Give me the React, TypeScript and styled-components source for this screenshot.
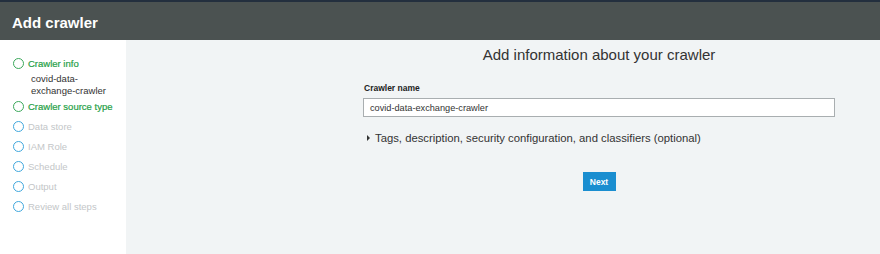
import React from "react";
import styled, { createGlobalStyle } from "styled-components";

const Global = createGlobalStyle`
  html, body { margin: 0; padding: 0; }
  body { font-family: "Liberation Sans", Arial, sans-serif; background: #f1f4f5; }
`;

const Page = styled.div`
  width: 880px;
  height: 254px;
  display: flex;
  flex-direction: column;
  overflow: hidden;
`;

const TopStrip = styled.div`
  height: 2px;
  background: #232f3e;
`;

const Header = styled.div`
  height: 38px;
  box-sizing: border-box;
  padding: 3px 0 0 12px;
  background: #4b5251;
  display: flex;
  align-items: center;
  color: #fff;
  font-weight: bold;
  font-size: 15px;
`;

const Body = styled.div`
  flex: 1;
  display: flex;
`;

const Sidebar = styled.nav`
  width: 126px;
  background: #fff;
  padding: 13px 0 0 13px;
  box-sizing: border-box;
  display: flex;
  flex-direction: column;
`;

const Step = styled.div<{ $done: boolean }>`
  display: flex;
  align-items: center;
  gap: 4px;
  height: 20px;
  font-size: 9.5px;
  color: ${(p) => (p.$done ? "#25a046" : "#c3c6c8")};
  -webkit-text-stroke: ${(p) => (p.$done ? "0.2px #25a046" : "0")};
`;

const Circle = styled.span<{ $done: boolean }>`
  width: 9px;
  height: 9px;
  border-radius: 50%;
  border: 1.5px solid ${(p) => (p.$done ? "#3aa85a" : "#3fa7dd")};
  flex: none;
`;

const SubText = styled.div`
  font-size: 9.5px;
  color: #333;
  padding-left: 18px;
  line-height: 11.5px;
`;

const Main = styled.main`
  flex: 1;
  display: flex;
  flex-direction: column;
  padding-left: 237px;
  padding-right: 45px;
`;

const Title = styled.h1`
  margin: 6px 0 0 0;
  font-weight: normal;
  font-size: 15px;
  color: #333;
  text-align: center;
  line-height: 18px;
`;

const Label = styled.div`
  margin-top: 19px;
  font-size: 8.5px;
  font-weight: bold;
  color: #222;
  padding-left: 1px;
`;

const Input = styled.div`
  margin-top: 5px;
  height: 19px;
  box-sizing: border-box;
  border: 1px solid #a9aeb0;
  background: #fff;
  font-size: 9.2px;
  color: #333;
  display: flex;
  align-items: center;
  padding-left: 6px;
`;

const Expander = styled.div`
  margin-top: 15px;
  display: flex;
  align-items: center;
  gap: 5px;
  padding-left: 4px;
  font-size: 11.3px;
  color: #333;
`;

const Arrow = styled.span`
  width: 0;
  height: 0;
  border-top: 3px solid transparent;
  border-bottom: 3px solid transparent;
  border-left: 3.5px solid #333;
`;

const ButtonRow = styled.div`
  margin-top: 28px;
  display: flex;
  justify-content: center;
`;

const Button = styled.button`
  width: 33px;
  height: 19px;
  padding: 0;
  border: none;
  background: #1a8ed0;
  color: #fff;
  font-family: "Liberation Sans", Arial, sans-serif;
  font-weight: bold;
  font-size: 8.5px;
`;

const steps = [
  { label: "Crawler info", done: true, sub: true },
  { label: "Crawler source type", done: true },
  { label: "Data store", done: false },
  { label: "IAM Role", done: false },
  { label: "Schedule", done: false },
  { label: "Output", done: false },
  { label: "Review all steps", done: false },
];

export default function App() {
  return (
    <Page>
      <Global />
      <TopStrip />
      <Header>Add crawler</Header>
      <Body>
        <Sidebar>
          {steps.map((s) => (
            <React.Fragment key={s.label}>
              <Step $done={s.done}>
                <Circle $done={s.done} />
                {s.label}
              </Step>
              {s.sub && (
                <SubText>
                  covid-data-
                  <br />
                  exchange-crawler
                </SubText>
              )}
            </React.Fragment>
          ))}
        </Sidebar>
        <Main>
          <Title>Add information about your crawler</Title>
          <Label>Crawler name</Label>
          <Input>covid-data-exchange-crawler</Input>
          <Expander>
            <Arrow />
            Tags, description, security configuration, and classifiers (optional)
          </Expander>
          <ButtonRow>
            <Button>Next</Button>
          </ButtonRow>
        </Main>
      </Body>
    </Page>
  );
}
